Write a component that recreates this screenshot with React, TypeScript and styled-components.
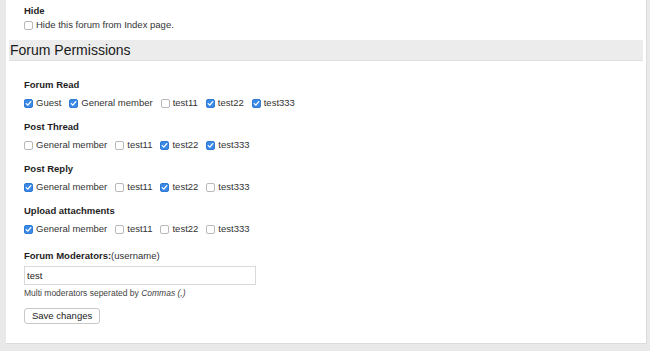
import React from "react";
import styled, { createGlobalStyle } from "styled-components";

const Global = createGlobalStyle`
  html, body { margin: 0; padding: 0; background: #e9e9e9; }
  body { font-family: "Liberation Sans", Arial, Helvetica, sans-serif; color: #222; }
`;

const Page = styled.div`
  width: 650px;
  height: 351px;
  overflow: hidden;
  background: #e9e9e9;
`;

const Panel = styled.div`
  margin: 0 6px 0 6px;
  width: 634px;
  background: #fff;
  border-right: 1px solid #dcdcdc;
  border-bottom: 1px solid #dcdcdc;
  padding: 4px 3px 19px 3px;
`;

const Section = styled.div`
  padding-left: 15px;
`;

const GroupLabel = styled.div<{ $top?: number; $bottom?: number }>`
  font-size: 9.5px;
  font-weight: bold;
  line-height: 14px;
  color: #1e1e1e;
  margin-top: ${(p) => p.$top ?? 0}px;
  margin-bottom: ${(p) => p.$bottom ?? 4}px;
`;

const Normal = styled.span`
  font-weight: normal;
  color: #333;
`;

const Row = styled.div`
  display: flex;
  align-items: center;
  gap: 8px;
  height: 14px;
`;

const Option = styled.label`
  display: inline-flex;
  align-items: center;
  gap: 3px;
  font-size: 9.5px;
  color: #333;
  line-height: 14px;
`;

const Box = styled.span<{ $on: boolean }>`
  display: inline-flex;
  align-items: center;
  justify-content: center;
  box-sizing: border-box;
  width: 9px;
  height: 9px;
  border-radius: 2px;
  background: ${(p) => (p.$on ? "#3b8ae6" : "#fff")};
  border: 1px solid ${(p) => (p.$on ? "#2f7ad6" : "#b9b9b9")};
`;

const Heading = styled.h2`
  margin: 8px 0 17px 0;
  height: 21px;
  box-sizing: border-box;
  background: #ececec;
  border-bottom: 1px solid #e1e1e1;
  font-size: 14px;
  font-weight: normal;
  color: #1a1a1a;
  line-height: 20px;
  padding-left: 1px;
`;

const TextInput = styled.input`
  display: block;
  box-sizing: border-box;
  width: 232px;
  height: 19px;
  border: 1px solid #d9d9d9;
  padding: 0 2px;
  font-family: "Liberation Sans", Arial, sans-serif;
  font-size: 9.5px;
  color: #222;
  outline: none;
`;

const Help = styled.div`
  font-size: 8.5px;
  line-height: 12px;
  color: #444;
  margin-top: 2px;
  em { font-style: italic; }
`;

const Button = styled.button`
  display: block;
  margin-top: 9px;
  height: 16px;
  padding: 0 7px;
  box-sizing: border-box;
  background: #fff;
  border: 1px solid #c9c9c9;
  border-radius: 3px;
  font-family: "Liberation Sans", Arial, sans-serif;
  font-size: 9.5px;
  color: #222;
  line-height: 14px;
`;

const Check = ({ on }: { on: boolean }) => (
  <Box $on={on}>
    {on && (
      <svg width="7" height="7" viewBox="0 0 7 7">
        <path d="M1.2 3.6 L2.8 5.1 L5.8 1.6" fill="none" stroke="#fff" strokeWidth="1.3" strokeLinecap="round" strokeLinejoin="round" />
      </svg>
    )}
  </Box>
);

type Opt = [string, boolean];

const groups: { title: string; opts: Opt[] }[] = [
  { title: "Forum Read", opts: [["Guest", true], ["General member", true], ["test11", false], ["test22", true], ["test333", true]] },
  { title: "Post Thread", opts: [["General member", false], ["test11", false], ["test22", true], ["test333", true]] },
  { title: "Post Reply", opts: [["General member", true], ["test11", false], ["test22", true], ["test333", false]] },
  { title: "Upload attachments", opts: [["General member", true], ["test11", false], ["test22", false], ["test333", false]] },
];

export default function App() {
  return (
    <Page>
      <Global />
      <Panel>
        <Section>
          <GroupLabel $bottom={0}>Hide</GroupLabel>
          <Row>
            <Option>
              <Check on={false} />
              Hide this forum from Index page.
            </Option>
          </Row>
        </Section>
        <Heading>Forum Permissions</Heading>
        <Section>
          {groups.map((g, i) => (
            <React.Fragment key={g.title}>
              <GroupLabel $top={i === 0 ? 0 : 10}>{g.title}</GroupLabel>
              <Row>
                {g.opts.map(([name, on]) => (
                  <Option key={name}>
                    <Check on={on} />
                    {name}
                  </Option>
                ))}
              </Row>
            </React.Fragment>
          ))}
          <GroupLabel $top={13} $bottom={3}>
            Forum Moderators:<Normal>(username)</Normal>
          </GroupLabel>
          <TextInput defaultValue="test" />
          <Help>
            Multi moderators seperated by <em>Commas (,)</em>
          </Help>
          <Button>Save changes</Button>
        </Section>
      </Panel>
    </Page>
  );
}
